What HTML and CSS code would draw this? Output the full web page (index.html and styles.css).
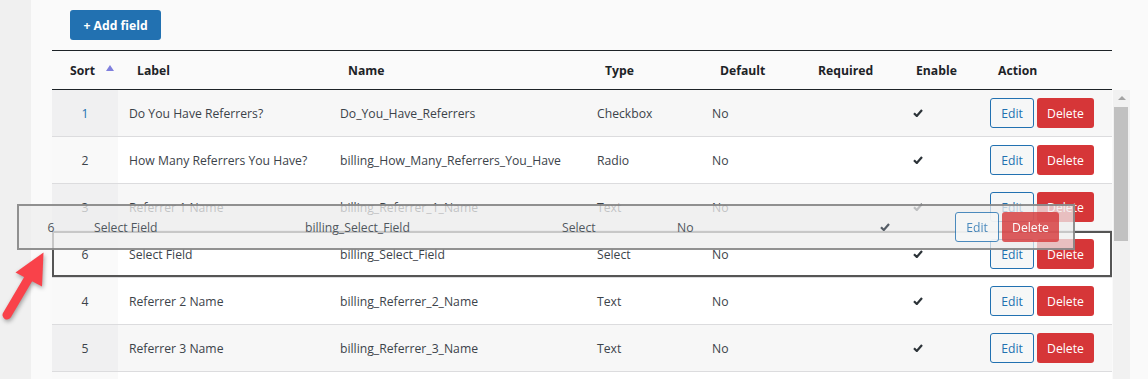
FILE: index.html
```html
<!DOCTYPE html>
<html lang="en">
<head>
  <meta charset="UTF-8" />
  <meta name="viewport" content="width=device-width, initial-scale=1.0"/>
  <title>Checkout Fields</title>
  <link rel="stylesheet" href="styles.css">
</head>
<body>
  <div class="page">
    <aside class="sidebar"></aside>

    <main class="main">
      <button class="btn-add">+ Add field</button>

      <div class="table-area">
        <table class="fields">
          <colgroup>
            <col class="c-sort"><col class="c-label"><col class="c-name"><col class="c-type">
            <col class="c-default"><col class="c-required"><col class="c-enable"><col class="c-action">
          </colgroup>
          <thead>
            <tr>
              <th class="th-sort">Sort <span class="sort-arrow"></span></th>
              <th>Label</th>
              <th>Name</th>
              <th>Type</th>
              <th>Default</th>
              <th>Required</th>
              <th>Enable</th>
              <th>Action</th>
            </tr>
          </thead>
          <tbody>
            <tr class="odd">
              <td class="sort link">1</td>
              <td>Do You Have Referrers?</td>
              <td>Do_You_Have_Referrers</td>
              <td>Checkbox</td>
              <td>No</td>
              <td></td>
              <td class="enable"><svg class="check" viewBox="0 0 10 8"><path d="M1 4.2 L3.8 7 L9 1"/></svg></td>
              <td class="actions"><button class="btn-edit">Edit</button><button class="btn-delete">Delete</button></td>
            </tr>
            <tr>
              <td class="sort">2</td>
              <td>How Many Referrers You Have?</td>
              <td>billing_How_Many_Referrers_You_Have</td>
              <td>Radio</td>
              <td>No</td>
              <td></td>
              <td class="enable"><svg class="check" viewBox="0 0 10 8"><path d="M1 4.2 L3.8 7 L9 1"/></svg></td>
              <td class="actions"><button class="btn-edit">Edit</button><button class="btn-delete">Delete</button></td>
            </tr>
            <tr class="odd">
              <td class="sort">3</td>
              <td>Referrer 1 Name</td>
              <td>billing_Referrer_1_Name</td>
              <td>Text</td>
              <td>No</td>
              <td></td>
              <td class="enable"><svg class="check" viewBox="0 0 10 8"><path d="M1 4.2 L3.8 7 L9 1"/></svg></td>
              <td class="actions"><button class="btn-edit">Edit</button><button class="btn-delete">Delete</button></td>
            </tr>
            <tr class="placeholder">
              <td class="sort">6</td>
              <td>Select Field</td>
              <td>billing_Select_Field</td>
              <td>Select</td>
              <td>No</td>
              <td></td>
              <td class="enable"><svg class="check" viewBox="0 0 10 8"><path d="M1 4.2 L3.8 7 L9 1"/></svg></td>
              <td class="actions"><button class="btn-edit">Edit</button><button class="btn-delete">Delete</button></td>
            </tr>
            <tr>
              <td class="sort">4</td>
              <td>Referrer 2 Name</td>
              <td>billing_Referrer_2_Name</td>
              <td>Text</td>
              <td>No</td>
              <td></td>
              <td class="enable"><svg class="check" viewBox="0 0 10 8"><path d="M1 4.2 L3.8 7 L9 1"/></svg></td>
              <td class="actions"><button class="btn-edit">Edit</button><button class="btn-delete">Delete</button></td>
            </tr>
            <tr class="odd">
              <td class="sort">5</td>
              <td>Referrer 3 Name</td>
              <td>billing_Referrer_3_Name</td>
              <td>Text</td>
              <td>No</td>
              <td></td>
              <td class="enable"><svg class="check" viewBox="0 0 10 8"><path d="M1 4.2 L3.8 7 L9 1"/></svg></td>
              <td class="actions"><button class="btn-edit">Edit</button><button class="btn-delete">Delete</button></td>
            </tr>
            <tr>
              <td class="sort"></td>
              <td></td><td></td><td></td><td></td><td></td><td></td><td></td>
            </tr>
          </tbody>
        </table>

        <div class="scrollbar">
          <div class="scroll-up"></div>
          <div class="scroll-thumb"></div>
        </div>
      </div>
    </main>

    <!-- row being dragged -->
    <div class="ghost">
      <table class="fields ghost-table">
        <colgroup>
          <col class="g-sort"><col class="c-label"><col class="c-name"><col class="c-type">
          <col class="c-default"><col class="c-required"><col class="c-enable"><col class="g-action">
        </colgroup>
        <tbody>
          <tr>
            <td class="sort">6</td>
            <td>Select Field</td>
            <td>billing_Select_Field</td>
            <td>Select</td>
            <td>No</td>
            <td></td>
            <td class="enable"><svg class="check" viewBox="0 0 10 8"><path d="M1 4.2 L3.8 7 L9 1"/></svg></td>
            <td class="actions"><button class="btn-edit">Edit</button><button class="btn-delete">Delete</button></td>
          </tr>
        </tbody>
      </table>
    </div>

    <svg class="pointer" viewBox="0 240 60 90">
      <path class="pointer-shaft" d="M30 276 L7 315"/>
      <polygon class="pointer-head" points="43.5,252.5 15.5,272.5 42,286.5"/>
    </svg>
  </div>
</body>
</html>
```
FILE: styles.css
```css
:root {
  --blue: #2271b1;
  --red: #d63638;
  --text: #3c434a;
  --heading: #1d2327;
  --line: #dcdcde;
  --font: 'Open Sans', 'Noto Sans', sans-serif;
}

html, body {
  margin: 0;
  padding: 0;
  height: 100%;
  overflow: hidden;
}

body {
  font-family: var(--font);
  font-size: 12.2px;
  color: var(--text);
  background-color: #fafafa;
}

.page {
  position: relative;
  display: flex;
  height: 100vh;
  overflow: hidden;
}

.sidebar {
  width: 31px;
  flex-shrink: 0;
  background-color: #f0f0f0;
}

.main {
  padding: 10px 0 0 21px;
}

.btn-add {
  display: block;
  margin-left: 18px;
  width: 91px;
  height: 30px;
  padding: 0;
  border: none;
  border-radius: 3px;
  background-color: var(--blue);
  color: #fff;
  font-family: var(--font);
  font-size: 12.2px;
  font-weight: 700;
}

.table-area {
  display: flex;
  align-items: flex-start;
  margin-top: 10px;
}

/* table */

.fields {
  width: 1060px;
  table-layout: fixed;
  border-collapse: separate;
  border-spacing: 0;
}

.c-sort { width: 66px; }
.c-label { width: 211px; }
.c-name { width: 257px; }
.c-type { width: 115px; }
.c-default { width: 98px; }
.c-required { width: 98px; }
.c-enable { width: 82px; }
.c-action { width: 133px; }

.fields th {
  box-sizing: border-box;
  height: 40px;
  padding: 0 0 0 19px;
  border-top: 1px solid var(--heading);
  border-bottom: 1px solid var(--heading);
  text-align: left;
  font-weight: 700;
  color: var(--heading);
  white-space: nowrap;
}

.fields th.th-sort {
  padding-left: 18px;
}

.sort-arrow {
  display: inline-block;
  margin-left: 8px;
  vertical-align: 4px;
  border-left: 4.5px solid transparent;
  border-right: 4.5px solid transparent;
  border-bottom: 6px solid #7f7fdd;
}

.fields td {
  box-sizing: border-box;
  height: 47px;
  padding: 0 0 0 11px;
  border-bottom: 1px solid var(--line);
  background-color: #fff;
  white-space: nowrap;
  overflow: hidden;
}

.fields tr.odd td {
  background-color: #f7f7f7;
}

.fields td.sort {
  padding: 0;
  text-align: center;
  background-color: #f9f9f9;
}

.fields tr.odd td.sort {
  background-color: #f0f0f1;
}

.fields td.link {
  color: var(--blue);
}

.fields td.enable {
  padding-left: 16px;
}

.fields td.actions {
  padding-left: 11px;
}

.check {
  display: block;
  width: 10px;
  height: 8px;
  fill: none;
  stroke: #2c3338;
  stroke-width: 2.2;
}

.btn-edit,
.btn-delete {
  height: 30px;
  padding: 0;
  border-radius: 3px;
  font-family: var(--font);
  font-size: 12.2px;
  vertical-align: middle;
}

.btn-edit {
  width: 44px;
  margin-right: 3px;
  border: 1px solid var(--blue);
  background-color: #f6f7f7;
  color: var(--blue);
}

.btn-delete {
  width: 57px;
  border: none;
  background-color: var(--red);
  color: #fff;
}

/* placeholder of the dragged row */

.fields tr.placeholder td {
  background-color: #fff;
  box-shadow: inset 0 2px 0 #555, inset 0 -2px 0 #555;
}

.fields tr.placeholder td.sort {
  background-color: #fafafa;
  box-shadow: inset 2px 0 0 #555, inset 0 2px 0 #555, inset 0 -2px 0 #555;
}

.fields tr.placeholder td.actions {
  box-shadow: inset -2px 0 0 #555, inset 0 2px 0 #555, inset 0 -2px 0 #555;
}

/* fake scrollbar */

.scrollbar {
  width: 17px;
  height: 300px;
  margin: 40px 0 0 1px;
  background-color: #f1f1f1;
}

.scroll-up {
  width: 0;
  height: 0;
  margin: 6px auto 0;
  border-left: 4px solid transparent;
  border-right: 4px solid transparent;
  border-bottom: 4px solid #a3a3a3;
}

.scroll-thumb {
  height: 134px;
  margin: 7px 2px 0 1px;
  background-color: #c1c1c1;
}

/* dragged row */

.ghost {
  position: absolute;
  left: 17px;
  top: 204px;
  width: 1054px;
  height: 42px;
  border: 2px solid rgba(120, 120, 120, 0.8);
  background-color: rgba(238, 238, 238, 0.75);
}

.ghost-table {
  width: 1054px;
}

.g-sort { width: 64px; }
.g-action { width: 129px; }

.ghost-table td,
.ghost-table tr td.sort {
  height: 42px;
  border-bottom: none;
  background-color: transparent;
  color: #50575e;
}

.ghost-table td.sort {
  background-color: rgba(220, 220, 220, 0.5);
}

.ghost-table td.enable {
  padding-left: 18px;
}

.ghost-table .check {
  stroke: #555d66;
}

.ghost-table .btn-edit,
.ghost-table .btn-delete {
  opacity: 0.8;
}

/* annotation arrow */

.pointer {
  position: absolute;
  left: 0;
  top: 240px;
  width: 60px;
  height: 90px;
  filter: drop-shadow(1px 2px 2px rgba(0, 0, 0, 0.35));
}

.pointer-shaft {
  stroke: #f9424a;
  stroke-width: 9;
  stroke-linecap: round;
}

.pointer-head {
  fill: #f9424a;
}
```
